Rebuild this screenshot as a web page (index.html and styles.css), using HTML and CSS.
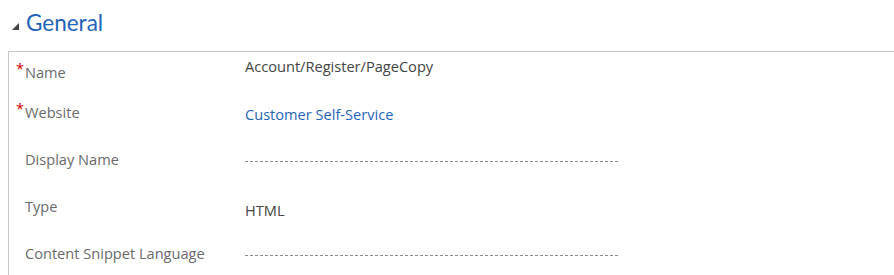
FILE: index.html
```html
<!DOCTYPE html>
<html lang="en">
<head>
    <meta charset="UTF-8">
    <title>General</title>
    <link rel="stylesheet" href="styles.css">
</head>
<body>
    <div class="section-head">
        <svg class="toggle" width="7" height="7" viewBox="0 0 7 7"><polygon points="7,0 7,7 0,7" fill="#444"/></svg>
        <h2>General</h2>
    </div>
    <div class="section">
        <div class="row row-first">
            <div class="label"><span class="req">*</span>Name</div>
            <div class="value">Account/Register/PageCopy</div>
        </div>
        <div class="row row-second">
            <div class="label"><span class="req">*</span>Website</div>
            <div class="value link">Customer Self-Service</div>
        </div>
        <div class="row">
            <div class="label"><span class="req"></span>Display Name</div>
            <div class="value"><div class="empty"></div></div>
        </div>
        <div class="row">
            <div class="label"><span class="req"></span>Type</div>
            <div class="value type">HTML</div>
        </div>
        <div class="row">
            <div class="label"><span class="req"></span>Content Snippet Language</div>
            <div class="value"><div class="empty"></div></div>
        </div>
    </div>
</body>
</html>
```

FILE: styles.css
```css
body {
    margin: 0;
    font-family: "Open Sans", "Noto Sans", sans-serif;
    font-size: 14.6px;
    background-color: #fff;
    color: #444;
}
.section-head {
    display: flex;
    align-items: center;
    height: 44px;
    padding-left: 12px;
}
.section-head .toggle {
    margin-top: 8px;
    margin-right: 7px;
}
.section-head h2 {
    margin: 0;
    font-family: Lato, "Open Sans", sans-serif;
    font-size: 22.5px;
    font-weight: 400;
    color: #1f64b8;
}
.section {
    margin-top: 7px;
    margin-left: 8px;
    width: 885px;
    border-top: 1px solid #c6c6c6;
    border-left: 1px solid #c6c6c6;
    height: 224px;
}
.row {
    display: flex;
    align-items: flex-start;
    height: 47px;
}
.label {
    width: 229px;
    padding-left: 7px;
    padding-top: 13px;
    line-height: 20px;
    color: #6a6a6a;
    white-space: nowrap;
}
.req {
    display: inline-block;
    width: 9px;
    color: #c00;
    vertical-align: top;
    line-height: 12px;
}
.value {
    padding-top: 15px;
    line-height: 20px;
}
.row-first {
    height: 37px;
}
.row-first .label {
    padding-top: 10px;
}
.row-first .value {
    padding-top: 4px;
}
.link {
    color: #1f64b8;
}
.type {
    padding-top: 17px;
}
.empty {
    width: 374px;
    height: 1px;
    margin-top: 10px;
    background: repeating-linear-gradient(to right, #8a8a8a 0 3px, transparent 3px 5px);
}
```
